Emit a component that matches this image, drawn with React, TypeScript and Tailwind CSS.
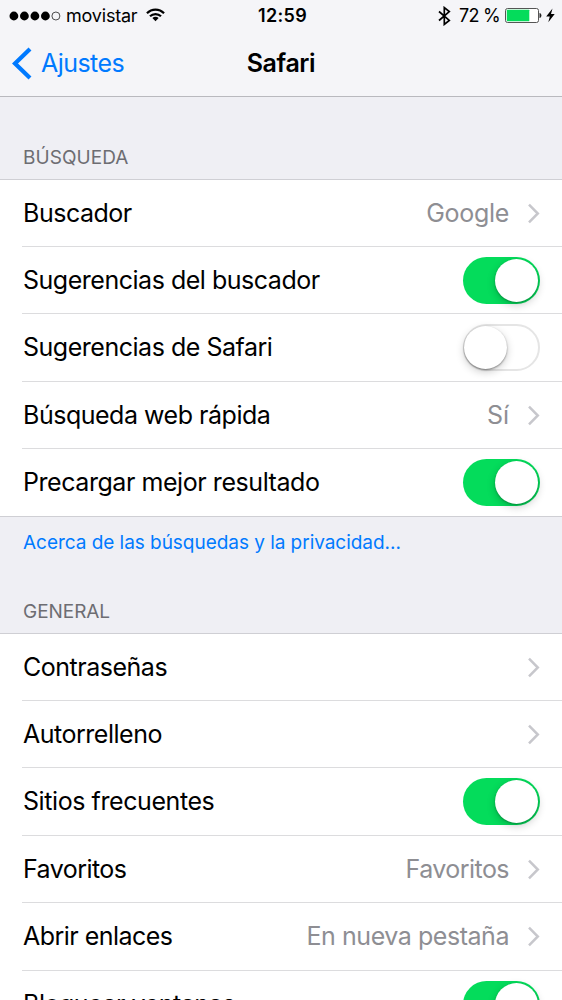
import type { ReactNode } from "react";

function Chevron() {
  return (
    <svg className="h-[21px] w-[13px] shrink-0" viewBox="0 0 13 21" fill="none">
      <path d="M2 1.700 10.800 10.500 2 19.300" stroke="#c7c7cc" strokeWidth="2.5" />
    </svg>
  );
}

function Toggle({ on }: { on: boolean }) {
  return on ? (
    <div className="flex h-[47px] w-[77px] shrink-0 items-center justify-end rounded-full bg-[#04dc5b] pr-[2px]">
      <div className="size-[43px] rounded-full bg-white shadow-[0_3px_8px_rgba(0,0,0,0.2),0_1px_2px_rgba(0,0,0,0.25)]" />
    </div>
  ) : (
    <div className="flex h-[47px] w-[77px] shrink-0 items-center rounded-full border-2 border-[#e5e5e5] bg-white">
      <div className="-ml-px size-[43px] rounded-full bg-white shadow-[0_3px_8px_rgba(0,0,0,0.2),0_1px_2px_rgba(0,0,0,0.4)]" />
    </div>
  );
}

type RowProps = {
  label: string;
  tracking?: string;
  size?: string;
  last?: boolean;
  children: ReactNode;
};

function Row({ label, tracking = "tracking-[-0.48px]", size = "h-[67px]", last = false, children }: RowProps) {
  return (
    <div className={`${size} shrink-0 ${last ? "" : "pl-[22px]"}`}>
      <div
        className={`flex h-full items-center justify-between border-b pr-[22px] ${
          last ? "border-[#cfcfd4] pl-[23px]" : "border-[#dcdcde] pl-px"
        }`}
      >
        <span className={`whitespace-nowrap pb-px text-[25px] leading-[30px] text-black ${tracking}`}>{label}</span>
        {children}
      </div>
    </div>
  );
}

function Detail({ text, tracking = "tracking-normal" }: { text?: string; tracking?: string }) {
  return (
    <div className="flex items-center gap-[18px]">
      {text && (
        <span className={`whitespace-nowrap pb-px text-[25px] leading-[30px] text-[#8e8e93] ${tracking}`}>{text}</span>
      )}
      <Chevron />
    </div>
  );
}

function StatusBar() {
  return (
    <div className="flex h-[31px] items-center justify-between pl-[9px] pr-[7px] text-black">
      <div className="flex w-[200px] items-center">
        <svg className="h-[10px] w-[52px]" viewBox="0 0 52 10">
          <circle cx="4.9" cy="5" r="4.4" />
          <circle cx="15.4" cy="5" r="4.4" />
          <circle cx="25.9" cy="5" r="4.4" />
          <circle cx="36.4" cy="5" r="4.4" />
          <circle cx="46.9" cy="5" r="4" fill="none" stroke="#222" strokeWidth="0.8" />
        </svg>
        <span className="ml-[5px] text-[18px] leading-[22px] tracking-[-0.2px]">movistar</span>
        <svg className="mb-px ml-[9px] h-[14px] w-[19px]" viewBox="0 0 20 14" fill="none" stroke="#000" strokeWidth="2.3">
          <path d="M1 5.200C6 0 14 0 19 5.200" />
          <path d="M4.200 8.400C7.400 5.200 12.600 5.200 15.800 8.400" />
          <path d="M10 13.500 6.700 10.200C8.600 8.400 11.400 8.400 13.300 10.200Z" fill="#000" stroke="none" />
        </svg>
      </div>
      <span className="pl-px text-[18px] font-semibold leading-[22px] tracking-[0.3px]">12:59</span>
      <div className="flex w-[200px] items-center justify-end">
        <svg className="h-[20px] w-[13px]" viewBox="0 0 13 20" fill="none" stroke="#000" strokeWidth="1.7">
          <path d="M1 5.500 11.300 14.400 6.300 18.400V1.600L11.300 5.600 1 14.500" />
        </svg>
        <span className="ml-[8px] whitespace-nowrap text-[18px] leading-[22px] tracking-[-0.7px]">72 %</span>
        <svg className="ml-[5px] h-[15px] w-[37px]" viewBox="0 0 37 15">
          <rect x="0.5" y="0.5" width="33" height="14" rx="2" fill="#fff" stroke="#555" strokeWidth="1" />
          <rect x="1.8" y="1.8" width="22.5" height="11.4" rx="0.5" fill="#04dc5b" />
          <path d="M34.500 5c2.600.5 2.600 4.500 0 5Z" fill="#222" />
        </svg>
        <svg className="ml-[4px] h-[15px] w-[9px]" viewBox="0 0 9 15">
          <path d="M6.500.5.200 8.500H3.800L2.300 14.300 8.700 6.100H5Z" />
        </svg>
      </div>
    </div>
  );
}

export default function App() {
  return (
    <div className="flex h-[1000px] w-[562px] flex-col overflow-hidden bg-[#efeff4] font-['Inter','Liberation_Sans',sans-serif]">
      <header className="h-[97px] shrink-0 border-b border-[#b9b9be] bg-[#f5f5f8]">
        <StatusBar />
        <div className="grid h-[64px] grid-cols-[1fr_auto_1fr] items-center">
          <div className="flex items-center gap-[9px] pl-[12px] text-[#007aff]">
            <svg className="h-[33px] w-[20px]" viewBox="0 0 20 33" fill="none">
              <path d="M18 2 3 16.500 18 31" stroke="currentColor" strokeWidth="4.2" />
            </svg>
            <span className="text-[25px] leading-[30px] tracking-[-0.55px]">Ajustes</span>
          </div>
          <h1 className="text-[25px] font-semibold leading-[30px] tracking-[-0.4px]">Safari</h1>
        </div>
      </header>
      <h2 className="flex h-[83px] shrink-0 items-end border-b border-[#cfcfd4] pb-[9px] pl-[23px] text-[19px] leading-[24px] text-[#6d6d72]">
        <span className="tracking-[0.05px]">BÚSQUEDA</span>
      </h2>
      <section className="flex shrink-0 flex-col bg-white">
        <Row label="Buscador">
          <Detail text="Google" tracking="tracking-[-0.3px]" />
        </Row>
        <Row label="Sugerencias del buscador">
          <Toggle on />
        </Row>
        <Row label="Sugerencias de Safari" size="h-[68px]">
          <Toggle on={false} />
        </Row>
        <Row label="Búsqueda web rápida">
          <Detail text="Sí" />
        </Row>
        <Row label="Precargar mejor resultado" tracking="tracking-[-0.44px]" size="h-[68px]" last>
          <Toggle on />
        </Row>
      </section>
      <a className="flex h-[51px] shrink-0 items-center pl-[23px] text-[19px] leading-[24px] text-[#007aff]">
        <span className="tracking-[-0.04px]">Acerca de las búsquedas y la privacidad...</span>
      </a>
      <h2 className="flex h-[66px] shrink-0 items-end border-b border-[#cfcfd4] pb-[9px] pl-[23px] text-[19px] leading-[24px] text-[#6d6d72]">
        <span className="tracking-[-0.05px]">GENERAL</span>
      </h2>
      <section className="flex flex-1 flex-col bg-white">
        <Row label="Contraseñas">
          <Detail />
        </Row>
        <Row label="Autorrelleno">
          <Detail />
        </Row>
        <Row label="Sitios frecuentes" tracking="tracking-[-0.42px]" size="h-[68px]">
          <Toggle on />
        </Row>
        <Row label="Favoritos" tracking="tracking-[-0.55px]">
          <Detail text="Favoritos" tracking="tracking-[-0.55px]" />
        </Row>
        <Row label="Abrir enlaces" tracking="tracking-[-0.53px]" size="h-[68px]">
          <Detail text="En nueva pestaña" tracking="tracking-[-0.45px]" />
        </Row>
        <Row label="Bloquear ventanas">
          <Toggle on />
        </Row>
      </section>
    </div>
  );
}
